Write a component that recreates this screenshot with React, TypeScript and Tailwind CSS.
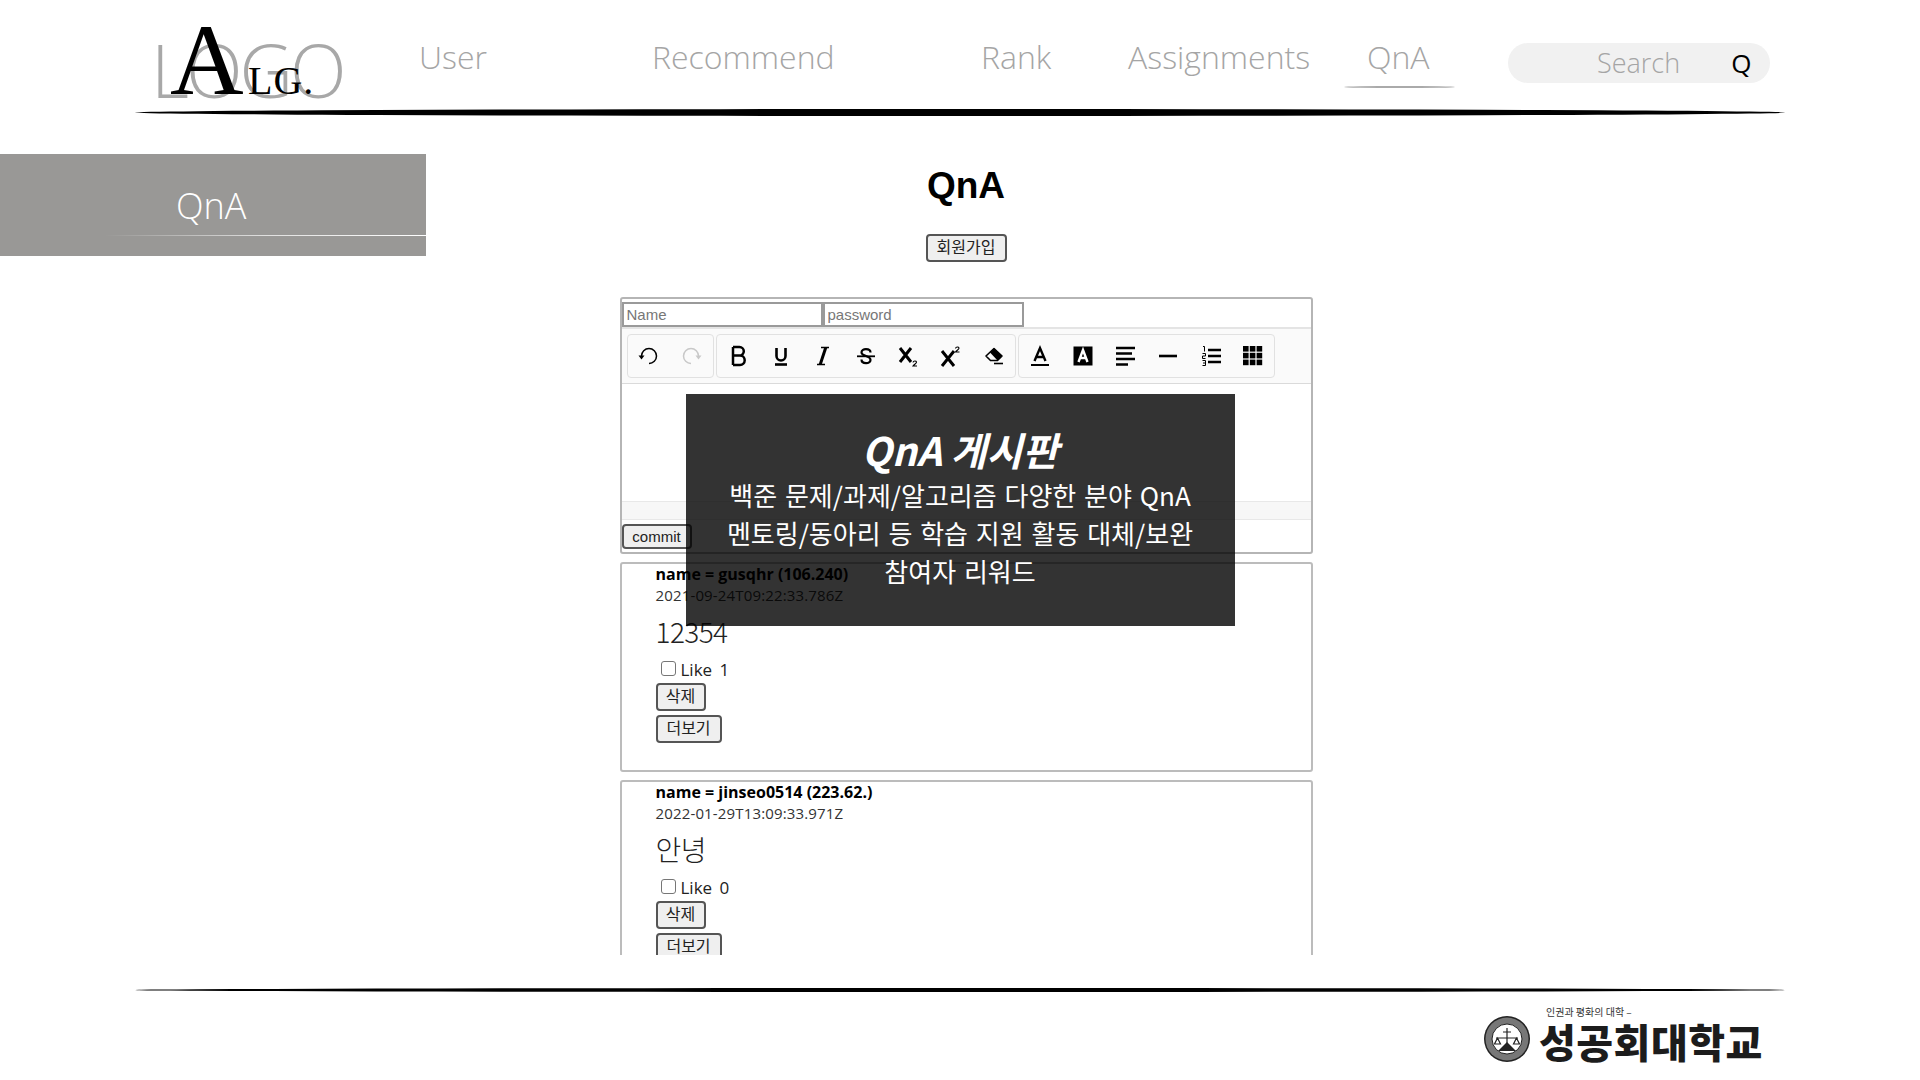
const sans = "font-['Open_Sans','Noto_Sans_CJK_KR',sans-serif]";
const btn =
  "block rounded-[4px] border-2 border-[#555] bg-[#efefef] font-['Liberation_Sans','Noto_Sans_CJK_KR',sans-serif] text-[#222]";

const navItems = [
  { label: "User", width: "w-[233px]" },
  { label: "Recommend", width: "w-[329px]" },
  { label: "Rank", width: "w-[147px]" },
  { label: "Assignments", width: "w-[239px]" },
];

function TaperLine({ height }: { height: string }) {
  return <div className={`mx-[135px] ${height} rounded-[50%] bg-black`} />;
}

function Logo() {
  return (
    <div className="relative h-[109px] w-[415px] shrink-0">
      <span className={`absolute left-[151px] top-[20px] text-[74px] font-light leading-[100px] tracking-[-3px] text-[#a8a8a8] ${sans}`}>
        LOGO
      </span>
      <span className="absolute left-[170px] top-[2px] font-['Liberation_Serif',serif] text-[102px] leading-[116px] text-black">
        A
      </span>
      <span className="absolute left-[248px] top-[53px] font-['Liberation_Serif',serif] text-[40px] leading-[56px] tracking-[1px] text-black">
        LG.
      </span>
    </div>
  );
}

// toolbar icons, all on a 24 grid
function Icon({ children, className }: { children: React.ReactNode; className?: string }) {
  return (
    <svg viewBox="0 0 24 24" className={`h-6 w-6 ${className ?? ""}`} fill="none" stroke="currentColor">
      {children}
    </svg>
  );
}

function UndoIcon({ className }: { className?: string }) {
  return (
    <Icon className={className}>
      <path d="M12 19.5A7.5 7.5 0 1 0 4.5 12" strokeWidth="1.5" />
      <path d="M1.5 11.5H7.5L4.5 15.5Z" fill="currentColor" stroke="none" />
    </Icon>
  );
}

function EraserIcon() {
  return (
    <Icon>
      <path d="M12 4.5 20 12 15.5 16.5H8.5L4 12Z" strokeWidth="1.6" strokeLinejoin="round" />
      <path d="M12 4.5 20 12 15.5 16.5 8 8.5Z" fill="currentColor" stroke="none" />
      <path d="M12 19.5H21" strokeWidth="1.6" />
    </Icon>
  );
}

function TableIcon() {
  const cells = [2, 8.8, 15.6];
  return (
    <Icon>
      {cells.map((y) =>
        cells.map((x) => <rect key={`${x}-${y}`} x={x} y={y} width="5.6" height="5.6" fill="currentColor" stroke="none" />)
      )}
    </Icon>
  );
}

function ToolButton({ children }: { children: React.ReactNode }) {
  return <div className="flex h-full w-[42.6px] items-center justify-center text-black">{children}</div>;
}

function ToolGroup({ children }: { children: React.ReactNode }) {
  return <div className="flex h-[44px] items-center rounded-[4px] border border-[#e1e1e1]">{children}</div>;
}

function Toolbar() {
  return (
    <div className="flex h-[55px] items-center gap-[2px] border-b border-[#dadada] bg-[#fafafa] pl-[5px]">
      <ToolGroup>
        <ToolButton>
          <UndoIcon />
        </ToolButton>
        <ToolButton>
          <UndoIcon className="-scale-x-100 text-[#c8c8c8]" />
        </ToolButton>
      </ToolGroup>
      <ToolGroup>
        <ToolButton>
          <Icon>
            <path d="M7 3V21M7 3H13.5A4.3 4.3 0 0 1 13.5 11.6H7M7 11.6H14A4.7 4.7 0 0 1 14 21H7" strokeWidth="2.5" />
          </Icon>
        </ToolButton>
        <ToolButton>
          <Icon>
            <path d="M7.5 4V12A4.5 4.5 0 0 0 16.5 12V4" strokeWidth="2.6" />
            <path d="M6 20.5H18" strokeWidth="2.6" />
          </Icon>
        </ToolButton>
        <ToolButton>
          <Icon>
            <path d="M10 3.5H18M6 20.5H14" strokeWidth="1.5" />
            <path d="M14.8 3.5 9.2 20.5" strokeWidth="3" />
          </Icon>
        </ToolButton>
        <ToolButton>
          <Icon>
            <path d="M16.5 8.5C16.5 4 7.5 4 7.5 8.2C7.5 10 9 11 12 12C15 13 16.5 14 16.5 16C16.5 20.3 7.5 20.3 7.5 15.5" strokeWidth="2.2" />
            <path d="M3 12.3H21" strokeWidth="1.8" />
          </Icon>
        </ToolButton>
        <ToolButton>
          <Icon>
            <path d="M4 4 15 18M15 4 4 18" strokeWidth="3" />
            <path d="M17 18.5C17.3 16.5 20.5 16.5 20.5 18.3C20.5 19.5 18 20.5 17 22H21" strokeWidth="1.1" />
          </Icon>
        </ToolButton>
        <ToolButton>
          <Icon>
            <path d="M3 7 15 22M15 7 3 22" strokeWidth="3" />
            <path d="M16.5 4.5C16.8 2.5 20 2.5 20 4.3C20 5.5 17.5 6.5 16.5 8H20.5" strokeWidth="1.1" />
          </Icon>
        </ToolButton>
        <ToolButton>
          <EraserIcon />
        </ToolButton>
      </ToolGroup>
      <ToolGroup>
        <ToolButton>
          <Icon>
            <path d="M6.5 17 12 4 17.5 17M8.2 13H15.8" strokeWidth="2.4" />
            <path d="M3 21H21" strokeWidth="2" />
          </Icon>
        </ToolButton>
        <ToolButton>
          <Icon>
            <rect x="2.5" y="2.5" width="19" height="19" fill="currentColor" stroke="none" />
            <path d="M7.5 18 12 6 16.5 18M9 14H15" strokeWidth="2.4" stroke="#fff" />
          </Icon>
        </ToolButton>
        <ToolButton>
          <Icon>
            <path d="M3 4H22M3 9.5H19M3 15H22M3 20.5H15" strokeWidth="2.4" />
          </Icon>
        </ToolButton>
        <ToolButton>
          <Icon>
            <path d="M3 12H21" strokeWidth="2.6" />
          </Icon>
        </ToolButton>
        <ToolButton>
          <Icon>
            <path d="M9 6H22M9 12H22M9 18H22" strokeWidth="2.4" />
            <path d="M4 2.5H5.5V7.5M3.5 9.5H6.5V12H3.5V14.5H6.5M3.5 16.5H6.5V21.5H3.5M4 19H6.5" strokeWidth="1" />
          </Icon>
        </ToolButton>
        <ToolButton>
          <TableIcon />
        </ToolButton>
      </ToolGroup>
    </div>
  );
}

function Editor() {
  return (
    <div className="h-[257px] rounded-[3px] border-2 border-[#b5b5b5] bg-white">
      <div className="flex h-[30px] items-start border-b-2 border-[#e4e4e4] pt-[3px]">
        <input
          placeholder="Name"
          className="h-[25px] w-[201px] border-2 border-[#9a9a9a] px-[3px] font-['Liberation_Sans',sans-serif] text-[15px] placeholder:text-[#777]"
        />
        <input
          placeholder="password"
          className="h-[25px] w-[201px] border-2 border-[#9a9a9a] px-[3px] font-['Liberation_Sans',sans-serif] text-[15px] placeholder:text-[#777]"
        />
      </div>
      <Toolbar />
      <div className="h-[117px]" />
      <div className="h-[19px] border-y border-[#e8e8e8] bg-[#f7f7f7]" />
      <button className={`${btn} mt-[4px] h-[25px] w-[70px] text-[15px] leading-none`}>commit</button>
    </div>
  );
}

function Post({ name, date, body, likes }: { name: string; date: string; body: string; likes: number }) {
  return (
    <div className={`h-[210px] rounded-[3px] border-2 border-[#bcbcbc] pl-[34px] ${sans}`}>
      <div className="h-[21px] text-[16px] font-bold leading-[21px] text-black">{name}</div>
      <div className="h-[21px] text-[15px] leading-[21px] tracking-[0.15px] text-[#333]">{date}</div>
      <div className="h-[53px] pt-[2px] font-['Noto_Sans_CJK_KR',sans-serif] text-[28px] font-light leading-[46px] tracking-[-0.6px] text-[#222]">
        {body}
      </div>
      <div className="flex h-[21px] items-center pl-[5px] text-[17px] leading-[21px] text-[#222] [word-spacing:3px]">
        <span className="mr-[5px] h-[15px] w-[15px] -translate-y-[1px] rounded-[3px] border border-[#767676] bg-white" />
        Like {likes}
      </div>
      <button className={`${btn} mt-[3px] h-[28px] w-[50px] text-[16px]`}>삭제</button>
      <button className={`${btn} mt-[4px] h-[28px] w-[66px] text-[16px]`}>더보기</button>
    </div>
  );
}

function Seal() {
  return (
    <svg viewBox="0 0 48 48" className="h-[48px] w-[48px] shrink-0">
      <circle cx="24" cy="24" r="23" fill="#222" />
      <circle cx="24" cy="24" r="21.5" fill="#777" />
      <circle cx="24" cy="24" r="15" fill="#fff" stroke="#222" />
      <path d="M24 13V28M20 17H28M13 23H35M14.5 23 11.5 29H17.5ZM33.5 23 30.5 29H36.5Z" stroke="#222" strokeWidth="1.2" fill="none" />
      <path d="M15 36 24 27 33 36Z" fill="#222" />
    </svg>
  );
}

export default function App() {
  return (
    <div className="flex h-screen w-full flex-col overflow-hidden bg-white">
      {/* top nav */}
      <header className="shrink-0">
        <div className="flex h-[109px] items-start">
          <Logo />
          <nav className={`flex h-[88px] items-center pl-[4px] pt-[26px] ${sans} text-[32px] font-light text-[#a5a5a5]`}>
            {navItems.map((item) => (
              <a key={item.label} className={`${item.width} whitespace-nowrap`}>
                {item.label}
              </a>
            ))}
            <a className="relative w-[141px] whitespace-nowrap">
              QnA
              <span className="absolute -left-[23px] top-[53px] h-[2px] w-[111px] rounded-[50%] bg-[#aaa]" />
            </a>
          </nav>
          <div className={`mt-[43px] flex h-[40px] w-[262px] items-center rounded-[20px] bg-[#f1f1f1] pl-[89px] ${sans}`}>
            <span className="text-[27px] font-light text-[#a5a5a5]">Search</span>
            <span className="ml-[51px] text-[26px] font-medium text-black">Q</span>
          </div>
        </div>
        <TaperLine height="h-[7px]" />
      </header>

      <div className="flex min-h-0 flex-1">
        {/* side menu */}
        <aside className="w-[426px] shrink-0 pt-[38px]">
          <div className="h-[102px] bg-[#999896] pt-[27px]">
            <div className={`pl-[176px] text-[36px] font-light leading-[50px] text-white ${sans}`}>QnA</div>
            <div className="ml-[105px] mt-[4px] h-px bg-gradient-to-r from-transparent via-white/70 to-white" />
          </div>
        </aside>

        {/* board */}
        <main className="w-[1080px] shrink-0">
          <h1 className="pt-[44px] text-center font-['Liberation_Sans',sans-serif] text-[37px] font-bold leading-[52px] text-black">QnA</h1>
          <button className={`${btn} mx-auto mt-[22px] h-[28px] w-[81px] text-[16px]`}>회원가입</button>
          <div className="relative mx-auto mt-[35px] h-[658px] w-[693px]">
            <div className="h-full overflow-hidden">
              <Editor />
              <div className="mt-[8px] flex flex-col gap-[8px]">
                <Post name="name = gusqhr (106.240)" date="2021-09-24T09:22:33.786Z" body="12354" likes={1} />
                <Post name="name = jinseo0514 (223.62.)" date="2022-01-29T13:09:33.971Z" body="안녕" likes={0} />
              </div>
            </div>
            <div className="absolute left-[66px] top-[97px] flex h-[232px] w-[549px] flex-col items-center bg-black/80 pt-[28px] font-['Noto_Sans_CJK_KR',sans-serif] text-white">
              <div className="text-[39px] font-bold italic leading-[54px]">QnA 게시판</div>
              <div className="text-[26px] leading-[38px] [word-spacing:2px]">백준 문제/과제/알고리즘 다양한 분야 QnA</div>
              <div className="text-[26px] leading-[38px] [word-spacing:2px]">멘토링/동아리 등 학습 지원 활동 대체/보완</div>
              <div className="text-[26px] leading-[38px] [word-spacing:2px]">참여자 리워드</div>
            </div>
          </div>
        </main>
      </div>

      {/* footer */}
      <footer className="h-[92px] shrink-0">
        <TaperLine height="h-[4px]" />
        <div className="flex justify-end pr-[157px] pt-[13px]">
          <div className="flex items-end gap-[8px]">
            <Seal />
            <div className="w-[224px]">
              <div className="pl-[7px] font-['Noto_Sans_CJK_KR',sans-serif] text-[10px] leading-[14px] text-[#333]">인권과 평화의 대학 –</div>
              <div className="whitespace-nowrap font-['Noto_Sans_CJK_KR',sans-serif] text-[40px] font-black leading-[44px] tracking-[0.5px] text-[#1c1c1c]">성공회대학교</div>
            </div>
          </div>
        </div>
      </footer>
    </div>
  );
}
